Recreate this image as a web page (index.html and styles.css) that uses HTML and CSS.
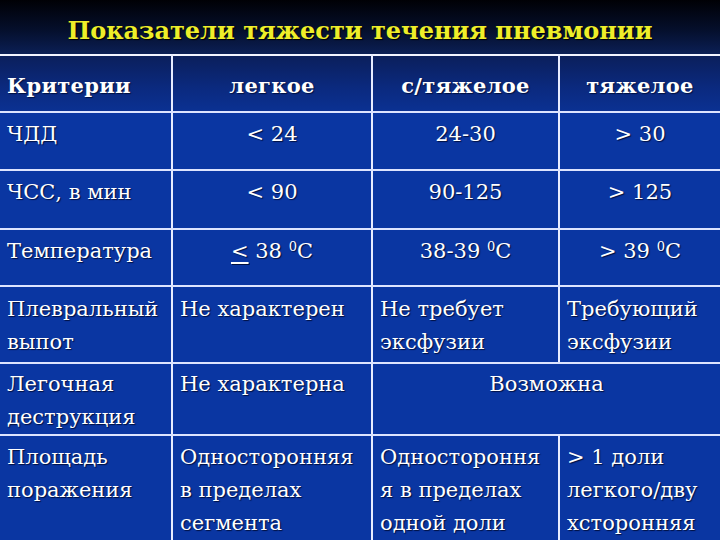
FILE: index.html
```html
<!DOCTYPE html>
<html lang="ru">
<head>
<meta charset="utf-8">
<title>Показатели тяжести течения пневмонии</title>
<link rel="stylesheet" href="styles.css">
</head>
<body>
<div class="slide">
  <h1 class="title">Показатели тяжести течения пневмонии</h1>
  <table class="grid">
    <colgroup>
      <col class="c1"><col class="c2"><col class="c3"><col class="c4">
    </colgroup>
    <tr class="head">
      <th class="left">Критерии</th>
      <th>легкое</th>
      <th>с/тяжелое</th>
      <th>тяжелое</th>
    </tr>
    <tr class="r1">
      <td class="left">ЧДД</td>
      <td>&lt; 24</td>
      <td>24-30</td>
      <td>&gt; 30</td>
    </tr>
    <tr class="r2">
      <td class="left">ЧСС, в мин</td>
      <td>&lt; 90</td>
      <td>90-125</td>
      <td>&gt; 125</td>
    </tr>
    <tr class="r3">
      <td class="left">Температура</td>
      <td><span class="le">&lt;</span> 38 <sup>0</sup>C</td>
      <td>38-39 <sup>0</sup>C</td>
      <td>&gt; 39 <sup>0</sup>C</td>
    </tr>
    <tr class="r4">
      <td class="left">Плевральный<br>выпот</td>
      <td class="left">Не характерен</td>
      <td class="left">Не требует<br>эксфузии</td>
      <td class="left">Требующий<br>эксфузии</td>
    </tr>
    <tr class="r5">
      <td class="left">Легочная<br>деструкция</td>
      <td class="left">Не характерна</td>
      <td colspan="2">Возможна</td>
    </tr>
    <tr class="r6">
      <td class="left">Площадь<br>поражения</td>
      <td class="left">Односторонняя<br>в пределах<br>сегмента</td>
      <td class="left">Одностороння<br>я в пределах<br>одной доли</td>
      <td class="left">&gt; 1 доли<br>легкого/дву<br>хсторонняя</td>
    </tr>
  </table>
</div>
</body>
</html>
```

FILE: styles.css
```css
html, body {
  margin: 0;
  padding: 0;
  background: #071a55;
}
.slide {
  width: 720px;
  height: 540px;
  overflow: hidden;
  background: linear-gradient(180deg, #000005 0px, #050f2c 30px, #0b1f55 54px, #0a2e8c 120px, #0a36a2 200px);
  font-family: "DejaVu Serif", "Liberation Serif", serif;
  color: #ffffff;
}
.title {
  margin: 0;
  height: 54px;
  box-sizing: border-box;
  padding-top: 16px;
  line-height: 30px;
  font-size: 24px;
  font-weight: bold;
  text-align: center;
  color: #eeee2a;
  text-shadow: 1px 1px 1px #000000;
}
.grid {
  width: 720px;
  border-collapse: collapse;
  table-layout: fixed;
  border-top: 2px solid #f2f4ff;
}
.c1 { width: 172px; }
.c2 { width: 200px; }
.c3 { width: 187px; }
.c4 { width: 161px; }
.grid th, .grid td {
  border-left: 2px solid #e8ecff;
  border-bottom: 2px solid #dde4ff;
  padding: 5px 0 0 0;
  vertical-align: top;
  text-align: center;
  font-size: 21px;
  line-height: 33px;
  white-space: nowrap;
  overflow: hidden;
  text-shadow: 1px 1px 1px #001040;
}
.grid th:first-child, .grid td:first-child {
  border-left: none;
}
.grid .left {
  text-align: left;
  padding-left: 7px;
}
.head th {
  height: 51px;
  padding-top: 4px;
  vertical-align: middle;
  font-weight: bold;
  font-size: 21px;
  letter-spacing: 0.3px;
  background: linear-gradient(180deg, #0b1f5c 0%, #0b2a80 60%, #0b3192 100%);
}
.r1 td, .r2 td, .r3 td, .r4 td, .r5 td, .r6 td {
  background: #0a36a2;
}
.r1 td { height: 51px; }
.r2 td { height: 52px; }
.r3 td { height: 50px; }
.r4 td { height: 69px; padding-top: 6px; }
.r5 td { height: 66px; padding-top: 4px; }
.r6 td { height: 110px; padding-top: 5px; border-bottom: none; }
.le {
  text-decoration: underline;
  text-decoration-thickness: 2px;
  text-underline-offset: 4px;
}
sup {
  font-size: 13px;
  line-height: 0;
  vertical-align: 7px;
}
```
